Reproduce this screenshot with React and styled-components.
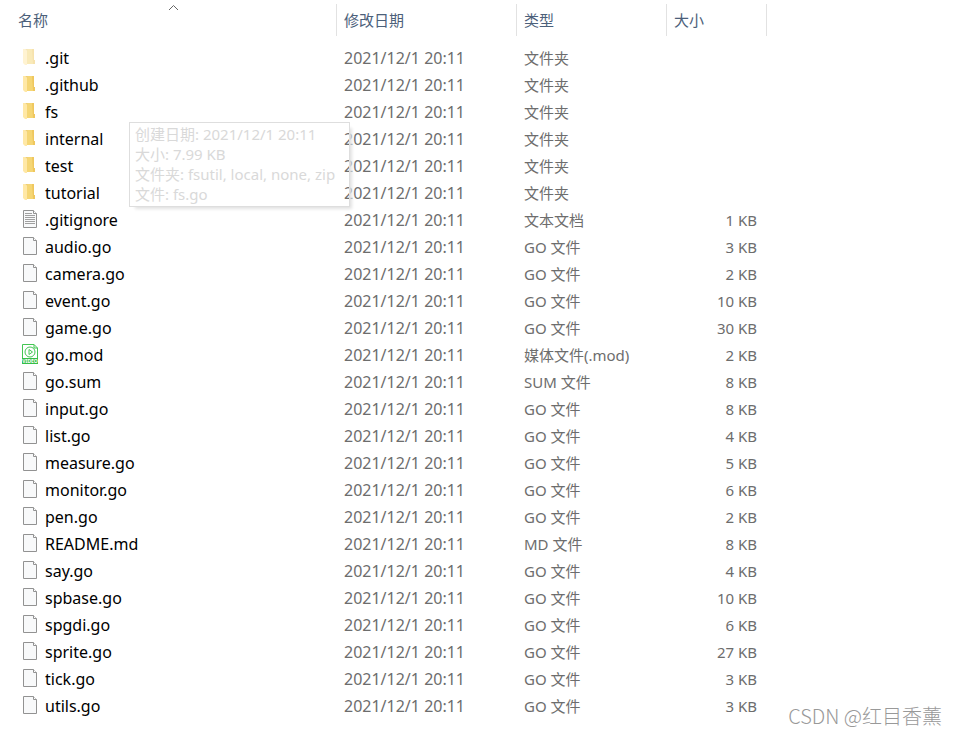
import React from 'react';
import styled, { createGlobalStyle } from 'styled-components';

const GlobalStyle = createGlobalStyle`
  body {
    margin: 0;
    background: #fff;
    font-family: "Noto Sans", "Noto Sans CJK SC", sans-serif;
    font-size: 15px;
  }
`;

const Explorer = styled.main`
  position: relative;
  min-height: 100vh;
  box-sizing: border-box;
  padding-top: 4px;
`;

const FileTable = styled.table`
  width: 100%;
  table-layout: fixed;
  border-collapse: separate;
  border-spacing: 0;
`;

const Column = styled.col`
  width: ${({ $width }) => ($width ? `${$width}px` : 'auto')};
`;

const HeadCell = styled.th`
  position: relative;
  height: 32px;
  padding: 0;
  border-right: 1px solid #e2e2e2;
  font-weight: 400;
  text-align: left;

  &:last-child {
    border-right: 0;
  }
`;

const SortButton = styled.button`
  display: block;
  width: 100%;
  height: 32px;
  padding: 0 0 0 ${({ $first }) => ($first ? '18px' : '7px')};
  border: 0;
  background: none;
  color: #4c607a;
  font: inherit;
  line-height: 32px;
  text-align: left;
`;

const SortMark = styled.svg`
  position: absolute;
  top: 0;
  left: 168px;
`;

const Body = styled.tbody`
  &::before {
    content: '';
    display: table-row;
    height: 9px;
  }
`;

const Cell = styled.td`
  height: 27px;
  padding: 0 10px 0 7px;
  color: #6d6d6d;
  line-height: 27px;
  text-align: ${({ $align }) => $align || 'left'};
  white-space: nowrap;
`;

const DateCell = styled(Cell)`
  font-size: 16px;
`;

const NameCell = styled(Cell)`
  position: relative;
  padding: 0 0 0 22px;
  color: #000;
`;

const Name = styled.div`
  display: flex;
  align-items: center;
  gap: 6px;
  height: 27px;
  font-size: 16px;

  svg {
    flex: none;
    margin-bottom: 4px;
    opacity: ${({ $hidden }) => ($hidden ? 0.5 : 1)};
  }
`;

const Tooltip = styled.div`
  position: absolute;
  top: 23px;
  left: 129px;
  z-index: 1;
  padding: 1px 14px 2px 5px;
  border: 1px solid #dedede;
  box-shadow: 4px 4px 3px -2px #e2e2e2;
  color: #d9d9d9;
  line-height: 20px;
`;

const Watermark = styled.div`
  position: absolute;
  right: 15px;
  bottom: 5px;
  color: #999;
  font-family: "Noto Sans CJK SC", sans-serif;
  font-size: 20px;
  font-weight: 300;
  line-height: 28px;
`;

const FolderIcon = () => (
  <svg width="17" height="18" viewBox="0 0 17 18" aria-hidden="true">
    <path d="M5 1H12V12H13V16H5Z" fill="#f5d675" />
    <path d="M10 1H12V12H13V16H11Z" fill="#efc75e" />
    <path d="M1 1H3L5 3V17H3L1 15Z" fill="#ffe8a6" />
    <path d="M1 1H6L5 3L3 1Z" fill="#efcf76" />
  </svg>
);

const PageIcon = ({ lined }) => (
  <svg width="17" height="20" viewBox="0 0 17 20" aria-hidden="true">
    <path d="M1.5 1.500H11.5L14.5 4.5V18.5H1.5Z" fill="#f8f9fa" stroke="#929292" />
    <path d="M11.5 1.500V4.5H14.5" fill="#fff" stroke="#929292" />
    {lined && (
      <path d="M3 4.5H10M3 6.5H13M3 8.5H13M3 10.5H13M3 12.5H13M3 14.5H13" stroke="#a0a0a0" />
    )}
  </svg>
);

const VideoIcon = () => (
  <svg width="17" height="20" viewBox="0 0 17 20" aria-hidden="true">
    <path d="M.5 14V.5H12L15.5 4V14" fill="#fff" stroke="#43c653" />
    <path d="M12 .5V4H15.5" fill="none" stroke="#43c653" />
    <circle cx="8" cy="8" r="5" fill="none" stroke="#43c653" />
    <path d="M7 5.5L10.5 8L7 10.5Z" fill="none" stroke="#43c653" />
    <rect y="14" width="16" height="6" fill="#35be47" />
    <text x="8" y="19" fill="#fff" fontSize="5" fontWeight="700" textAnchor="middle">VIDEO</text>
  </svg>
);

const icons = {
  folder: <FolderIcon />,
  text: <PageIcon lined />,
  video: <VideoIcon />,
  page: <PageIcon />,
};

const MODIFIED = '2021/12/1 20:11';

// name, type, size, icon
const files = [
  ['.git', '文件夹', '', 'folder'],
  ['.github', '文件夹', '', 'folder'],
  ['fs', '文件夹', '', 'folder'],
  ['internal', '文件夹', '', 'folder'],
  ['test', '文件夹', '', 'folder'],
  ['tutorial', '文件夹', '', 'folder'],
  ['.gitignore', '文本文档', '1 KB', 'text'],
  ['audio.go', 'GO 文件', '3 KB', 'page'],
  ['camera.go', 'GO 文件', '2 KB', 'page'],
  ['event.go', 'GO 文件', '10 KB', 'page'],
  ['game.go', 'GO 文件', '30 KB', 'page'],
  ['go.mod', '媒体文件(.mod)', '2 KB', 'video'],
  ['go.sum', 'SUM 文件', '8 KB', 'page'],
  ['input.go', 'GO 文件', '8 KB', 'page'],
  ['list.go', 'GO 文件', '4 KB', 'page'],
  ['measure.go', 'GO 文件', '5 KB', 'page'],
  ['monitor.go', 'GO 文件', '6 KB', 'page'],
  ['pen.go', 'GO 文件', '2 KB', 'page'],
  ['README.md', 'MD 文件', '8 KB', 'page'],
  ['say.go', 'GO 文件', '4 KB', 'page'],
  ['spbase.go', 'GO 文件', '10 KB', 'page'],
  ['spgdi.go', 'GO 文件', '6 KB', 'page'],
  ['sprite.go', 'GO 文件', '27 KB', 'page'],
  ['tick.go', 'GO 文件', '3 KB', 'page'],
  ['utils.go', 'GO 文件', '3 KB', 'page'],
];

const FolderTooltip = () => (
  <Tooltip role="tooltip">
    <div>创建日期: 2021/12/1 20:11</div>
    <div>大小: 7.99 KB</div>
    <div>文件夹: fsutil, local, none, zip</div>
    <div>文件: fs.go</div>
  </Tooltip>
);

const FileRow = ({ file: [name, type, size, icon] }) => (
  <tr>
    <NameCell>
      <Name $hidden={name === '.git'}>
        {icons[icon]}
        <span>{name}</span>
      </Name>
      {name === 'fs' && <FolderTooltip />}
    </NameCell>
    <DateCell>{MODIFIED}</DateCell>
    <Cell>{type}</Cell>
    <Cell $align="right">{size}</Cell>
    <Cell />
  </tr>
);

const App = () => (
  <>
    <GlobalStyle />
    <Explorer>
      <FileTable>
        <colgroup>
          <Column $width={337} />
          <Column $width={180} />
          <Column $width={150} />
          <Column $width={100} />
          <Column />
        </colgroup>
        <thead>
          <tr>
            <HeadCell aria-sort="ascending">
              <SortButton type="button" $first>名称</SortButton>
              <SortMark width="11" height="7" viewBox="0 0 11 7" aria-hidden="true">
                <path d="M1 6L5.500 1.500L10 6" fill="none" stroke="#666" />
              </SortMark>
            </HeadCell>
            <HeadCell><SortButton type="button">修改日期</SortButton></HeadCell>
            <HeadCell><SortButton type="button">类型</SortButton></HeadCell>
            <HeadCell><SortButton type="button">大小</SortButton></HeadCell>
            <HeadCell />
          </tr>
        </thead>
        <Body>
          {files.map((file) => (
            <FileRow key={file[0]} file={file} />
          ))}
        </Body>
      </FileTable>
      <Watermark>CSDN @红目香薰</Watermark>
    </Explorer>
  </>
);

export default App;
